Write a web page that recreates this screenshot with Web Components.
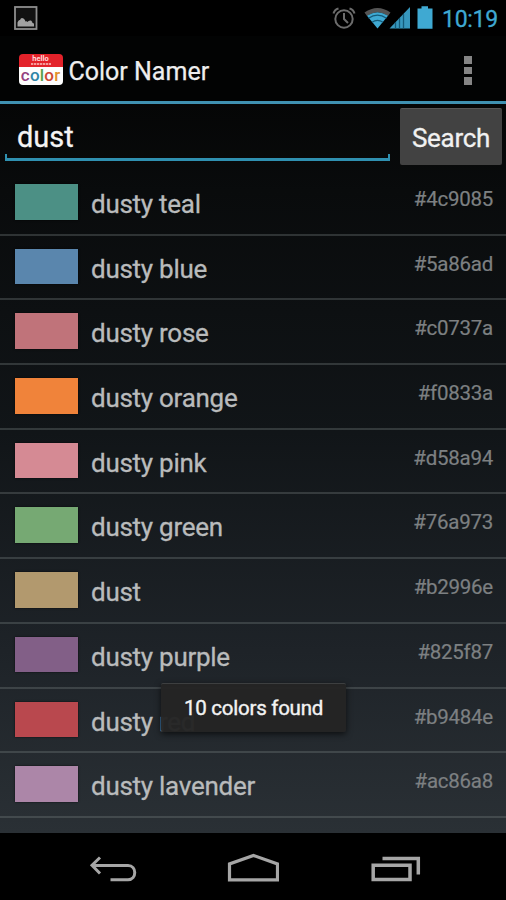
<!DOCTYPE html>
<html lang="en">
<head>
<meta charset="utf-8">
<title>Color Namer</title>
<style>
html,body{margin:0;background:#000}
body{width:506px;height:900px;overflow:hidden;font-family:Roboto,"Noto Sans",sans-serif}
</style>
</head>
<body>
<phone-screen></phone-screen>
<script>
class Base extends HTMLElement{
  connectedCallback(){
    if(this.shadowRoot)return;
    this.attachShadow({mode:'open'}).innerHTML=this.view();
  }
}
customElements.define('status-bar',class extends Base{view(){return `
<style>
:host{display:flex;height:36px;align-items:flex-start;box-sizing:border-box;color:#3fa9d2}
.l{margin-left:13px}
svg{display:block}
.r{margin-left:auto}
.time{width:64px;font-size:23px;line-height:27px;padding-top:6px;white-space:nowrap;letter-spacing:-.3px;-webkit-text-stroke:.3px #3fa9d2}
</style>
<svg class="l" width="26" height="36"><rect x="2" y="7" width="21.5" height="22" fill="#111" stroke="#8e8e8e" stroke-width="1.8"/><path d="M4.500 26.500V22.500q1-3 2.500-2.500q1-3 3.500-1.500q1.500 1 2 3q1.500-.5 2 .5q1-2 3.500-1.500q1.500 1 1.500 2.500q1.500 0 1.500 1V26.500z" fill="#a2a2a2"/></svg>
<svg class="r" width="110" height="36">
<g fill="none" stroke="#6c6c6c" stroke-width="2"><circle cx="12" cy="19" r="8.700"/><path d="M12 13v6l4 4M1.500 13.500q1-4 5-5M22.500 13.500q-1-4-5-5"/></g>
<path d="M32.500 12.600Q45.500 3.600 58.500 12.600L56 16Q45.500 8.600 35 16z" fill="#555"/>
<path d="M35 15.800Q45.500 8.600 56 15.800L45.500 28.500z" fill="#3fa9d2"/>
<path d="M36.500 18.300Q45.500 12 54.500 18.300M40 22.300Q45.500 18.500 51 22.300" fill="none" stroke="#145a78" stroke-width="1.300"/>
<path d="M78 7V28.500H57.500z" fill="#3797bd"/>
<path d="M63.500 22V28.500M67.500 18V28.500M71.500 14V28.500" stroke="#145a78" stroke-width="1.300"/>
<path d="M85.500 8.500h4V6.300h6.500v2.200h4.500v20.300h-15z" fill="#3fa9d2"/>
</svg><div class="time">10:19</div>`}});
customElements.define('app-logo',class extends Base{view(){return `
<style>
:host{display:flex;flex-direction:column;width:44px;height:31px;border-radius:4px;overflow:hidden;background:linear-gradient(#e3222a 0 13px,#fdfdfd 13px);text-align:center;white-space:nowrap}
.h{height:9px;font:700 7.500px/9px Roboto,sans-serif;color:#ffd9d9}
.s{width:20px;height:2px;margin:0 auto 2px;background:repeating-linear-gradient(90deg,#f59a9a 0 2px,#e8484e 2px 3px)}
.c{font:500 17px/16px Roboto,sans-serif;display:flex;justify-content:center;gap:.2px}
</style><div class="h">hello</div><div class="s"></div><div class="c"><span style="color:#93407f">c</span><span style="color:#2f86a8">o</span><span style="color:#57a24c">l</span><span style="color:#cc4936">o</span><span style="color:#e2902d">r</span></div>`}});
customElements.define('action-bar',class extends Base{view(){return `
<style>
:host{display:flex;height:68px;box-sizing:border-box;align-items:center;padding:2px 34px 0 18.500px;border-bottom:3.500px solid #3f91b1;background:#020303}
h1{margin:4px 0 0 6px;font-weight:400;font-size:25px;line-height:30px;color:#eee;white-space:nowrap;-webkit-text-stroke:.25px #eee}
.m{margin-left:auto;display:grid;gap:3px;padding-top:2px}
i{width:8.500px;height:7.700px;background:#858585}
</style><app-logo></app-logo><h1>Color Namer</h1><div class="m"><i></i><i></i><i></i></div>`}});
customElements.define('search-row',class extends Base{view(){return `
<style>
:host{display:flex;height:67px;box-sizing:border-box;padding:0 4px 0 5px}
.f{position:relative;width:385px;height:57px;box-sizing:border-box;border-bottom:3px solid #2f90b0;color:#f4f4f4;font-size:29px;line-height:34px;padding:16px 0 0 12px;-webkit-text-stroke:.3px #f4f4f4}
.f:before,.f:after{content:"";position:absolute;bottom:0;width:2px;height:4px;background:#2f90b0}
.f:before{left:0}.f:after{right:0}
button{all:unset;box-sizing:border-box;margin:4px 0 0 auto;width:102px;height:57px;background:#424242;border-top:1px solid #575757;border-radius:2px;text-align:center;color:#f1f1f1;font-size:26px;line-height:58px;letter-spacing:-.3px;-webkit-text-stroke:.3px #f1f1f1}
</style><div class="f">dust</div><button>Search</button>`}});
customElements.define('color-row',class extends Base{view(){const h=this.getAttribute('hex');return `
<style>
:host{display:flex;height:64.700px;box-sizing:border-box;border-bottom:2px solid rgba(120,130,130,.33);padding:13px 13px 0 14.500px;align-items:flex-start}
.s{width:63px;height:35.500px;background:${h};box-shadow:0 0 2px #000b}
.n{margin-left:13.500px;font-size:26px;line-height:40px;color:#b9bbbc;white-space:nowrap;letter-spacing:-.27px;-webkit-text-stroke:.3px #b9bbbc}
.h{margin-left:auto;font-size:20.500px;line-height:31px;color:#7d8082;letter-spacing:-.25px;-webkit-text-stroke:.2px #7d8082}
</style><div class="s"></div><div class="n"><slot></slot></div><div class="h">${h}</div>`}});
customElements.define('toast-message',class extends Base{view(){return `
<style>
:host{position:absolute;left:161px;top:683px;width:185px;height:49px;box-sizing:border-box;background:rgba(36,36,36,.97);border-top:1px solid #3d3f40;border-radius:2px;box-shadow:0 2px 6px #000a;color:#f2f2f2;font-size:20.500px;line-height:49px;letter-spacing:-.25px;text-align:center;white-space:nowrap;-webkit-text-stroke:.4px #f2f2f2}
</style><slot></slot>`}});
customElements.define('nav-bar',class extends Base{view(){return `
<style>
:host{display:grid;grid-template-columns:repeat(3,52px);gap:90px;justify-content:center;height:67px;background:#000}
svg{display:block}
</style>
<svg width="52" height="67" fill="none" stroke="#a6a6a6" stroke-width="3"><path d="M6.500 32.500H43C52 32.500 52 46.700 43 46.700H25.500M15 24.500L7 32.300L15 40.500"/></svg>
<svg width="52" height="67" fill="none" stroke="#a6a6a6" stroke-width="3.200"><path d="M2.500 46.800V31L26.500 22.500L50.500 31V46.800z"/></svg>
<svg width="52" height="67" fill="none" stroke="#a6a6a6" stroke-width="3.500"><path d="M4.200 32.300H41V46.500H4.200zM13.500 25.500H49.300V41.500"/></svg>`}});
customElements.define('phone-screen',class extends Base{view(){
const rows=[['dusty teal','#4c9085'],['dusty blue','#5a86ad'],['dusty rose','#c0737a'],['dusty orange','#f0833a'],['dusty pink','#d58a94'],['dusty green','#76a973'],['dust','#b2996e'],['dusty purple','#825f87'],['dusty red','#b9484e'],['dusty lavender','#ac86a8']];
return `
<style>
:host{display:flex;flex-direction:column;position:relative;width:506px;height:900px;overflow:hidden;background:#000}
main{height:729px;background:linear-gradient(#050606,#090b0c 12%,#111518 45%,#1e2328 75%,#2a3035)}
</style>
<status-bar></status-bar><action-bar></action-bar>
<main><search-row></search-row>${rows.map(r=>`<color-row hex="${r[1]}">${r[0]}</color-row>`).join('')}</main>
<nav-bar></nav-bar><toast-message>10 colors found</toast-message>`}});
</script>
</body>
</html>
